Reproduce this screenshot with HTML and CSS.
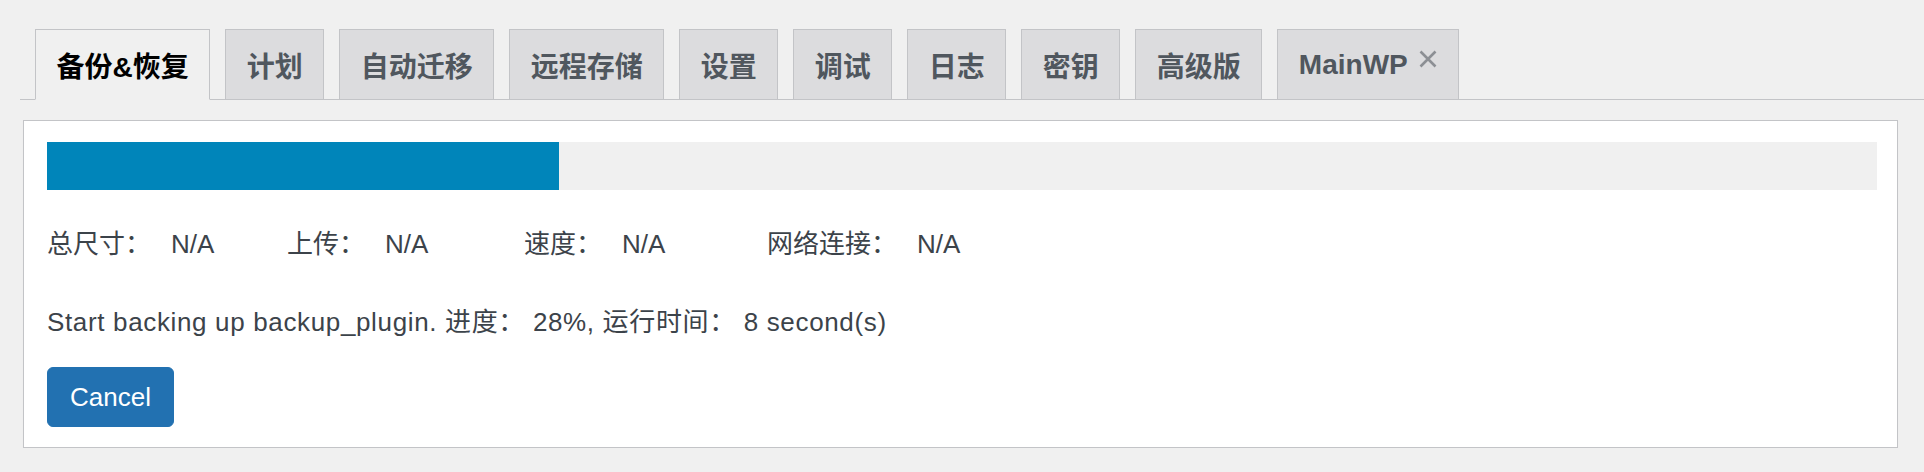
FILE: index.html
```html
<!DOCTYPE html>
<html lang="zh-CN">
<head>
<meta charset="utf-8">
<title>Backup</title>
<link rel="stylesheet" href="styles.css">
</head>
<body>
<div class="page">
  <nav class="tabs">
    <a class="tab active">备份&amp;恢复</a>
    <a class="tab">计划</a>
    <a class="tab">自动迁移</a>
    <a class="tab">远程存储</a>
    <a class="tab">设置</a>
    <a class="tab">调试</a>
    <a class="tab">日志</a>
    <a class="tab">密钥</a>
    <a class="tab">高级版</a>
    <a class="tab">MainWP<span class="close"><svg width="20" height="20" viewBox="0 0 20 20"><path d="M2.5 2.5 L17.5 17.5 M17.5 2.5 L2.5 17.5" stroke="#8c8f94" stroke-width="2.6" fill="none"/></svg></span></a>
  </nav>
  <div class="box">
    <div class="bar"><div class="fill" style="width:28%"></div></div>
    <div class="stats">
      <span class="stat s1"><span class="lbl">总尺寸：</span><span class="val">N/A</span></span>
      <span class="stat s2"><span class="lbl">上传：</span><span class="val">N/A</span></span>
      <span class="stat s3"><span class="lbl">速度：</span><span class="val">N/A</span></span>
      <span class="stat"><span class="lbl">网络连接：</span><span class="val">N/A</span></span>
    </div>
    <div class="status">Start backing up backup_plugin. 进度： 28%, 运行时间： 8 second(s)</div>
    <button class="btn">Cancel</button>
  </div>
</div>
</body>
</html>
```
FILE: styles.css
```css
html, body {
  margin: 0;
  background: #f0f0f0;
}
body {
  font-family: "Liberation Sans", "Noto Sans CJK SC", sans-serif;
  color: #3c434a;
}
.tabs {
  display: flex;
  align-items: flex-end;
  margin-left: 20px;
  padding-top: 29px;
  border-bottom: 1px solid #c3c4c7;
}
.tab {
  display: flex;
  align-items: center;
  margin-left: 15px;
  margin-bottom: -1px;
  height: 69px;
  padding: 0 20.5px;
  border: 1px solid #c3c4c7;
  background: #dcdcde;
  color: #50575e;
  font-size: 28px;
  font-weight: 700;
  white-space: nowrap;
}
.tab.active {
  background: #f0f0f0;
  color: #000;
  border-bottom-color: #f0f0f0;
}
.close {
  display: flex;
  margin-left: 10px;
  margin-bottom: 12px;
}
.box {
  margin: 20px 26px 0 23px;
  background: #fff;
  border: 1px solid #c3c4c7;
  box-shadow: 0 1px 1px rgba(0, 0, 0, 0.04);
  padding: 21px 20px 20px 23px;
}
.bar {
  height: 48px;
  background: #f0f0f0;
}
.fill {
  height: 100%;
  background: #0085ba;
}
.stats {
  display: flex;
  margin-top: 34px;
  font-size: 26px;
  line-height: 40px;
}
.s1 { width: 240px; }
.s2 { width: 237px; }
.s3 { width: 243px; }
.val { margin-left: 20px; }
.status {
  margin-top: 38px;
  font-size: 26px;
  line-height: 40px;
  letter-spacing: 0.65px;
}
.btn {
  display: block;
  margin-top: 25px;
  height: 60px;
  padding: 0 22px;
  background: #2271b1;
  border: 1px solid #2271b1;
  border-radius: 6px;
  color: #fff;
  font-family: inherit;
  font-size: 26px;
}
```
